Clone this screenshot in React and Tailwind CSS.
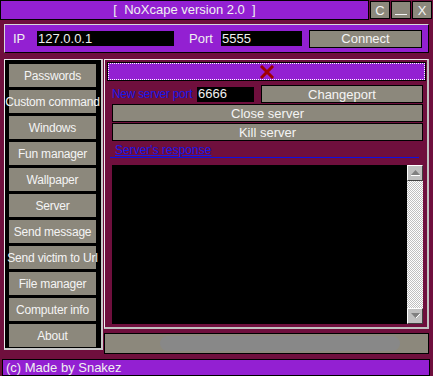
import React from 'react';

const font = { fontFamily: '"Liberation Sans", Arial, sans-serif' };

const navItems = [
  'Passwords',
  'Custom command',
  'Windows',
  'Fun manager',
  'Wallpaper',
  'Server',
  'Send message',
  'Send victim to Url',
  'File manager',
  'Computer info',
  'About',
];

const GrayButton = ({ children, className = '' }) => (
  <div
    className={`flex items-center justify-center bg-[#8c887c] border border-black text-[#f4f4f4] text-[12px] leading-none whitespace-nowrap ${className}`}
  >
    {children}
  </div>
);

export default function App() {
  return (
    <div className="w-[433px] h-[376px] bg-[#6f0f3d] overflow-hidden flex flex-col select-none" style={font}>
      {/* title bar */}
      <div className="flex h-[20px] items-stretch">
        <div className="w-[369px] bg-[#9320d2] border border-black flex items-center justify-center text-[#f0f0f0] text-[13px]">
          [&nbsp; NoXcape version 2.0 &nbsp;]
        </div>
        <div className="flex gap-px ml-px py-px">
          <GrayButton className="w-[20px] text-[13px]">C</GrayButton>
          <GrayButton className="w-[20px] items-end pb-[3px]">
            <span className="block w-[12px] h-px bg-[#f4f4f4]" />
          </GrayButton>
          <GrayButton className="w-[20px] text-[13px]">X</GrayButton>
        </div>
      </div>

      {/* connection panel */}
      <div className="ml-[4px] mt-[4px] w-[425px] h-[31px] bg-[#9320d2] border-t border-l border-[#d8d8d8] border-r border-b border-r-black border-b-black flex items-center text-[#f0f0f0] text-[13px]">
        <span className="ml-[8px] w-[24px]">IP</span>
        <div className="w-[137px] h-[15px] bg-black flex items-center px-[1px]">127.0.0.1</div>
        <span className="ml-[15px] w-[32px]">Port</span>
        <div className="w-[81px] h-[15px] bg-black flex items-center px-[1px]">5555</div>
        <GrayButton className="ml-[7px] w-[113px] h-[18px] text-[13px]">Connect</GrayButton>
      </div>

      {/* main */}
      <div className="flex mt-[6px] ml-[4px]">
        {/* nav */}
        <div className="w-[99px] h-[291px] bg-black border-t border-l border-[#e8e8e8] border-r-2 border-b-2 border-r-[#c8c8c8] border-b-[#c8c8c8] flex flex-col gap-[3px] pl-[4px] pt-[4px]">
          {navItems.map((item) => (
            <GrayButton key={item} className="w-[87px] h-[23px] border-0 text-[11.5px] tracking-[-0.2px]">
              {item}
            </GrayButton>
          ))}
        </div>

        {/* right column */}
        <div className="flex flex-col ml-[1px]">
          <div className="w-[325px] h-[270px] border-t border-l border-[#f0f0f0] border-r-2 border-b-2 border-r-[#c0c0c0] border-b-[#c0c0c0] flex flex-col">
            <div className="mt-[2px] ml-[2px] w-[319px] h-[19px] bg-black p-px">
              <div className="h-full bg-[#9320d2] border border-dotted border-white flex items-center justify-center">
                <svg width="14" height="14" viewBox="0 0 14 14">
                  <path d="M2 2 L12 12 M12 2 L2 12" stroke="#a00000" strokeWidth="3" strokeLinecap="square" />
                </svg>
              </div>
            </div>
            <div className="flex items-center mt-[4px] ml-[7px] h-[18px]">
              <span className="text-[#1818e8] text-[12px] tracking-[-0.3px] w-[85px] shrink-0 whitespace-nowrap">New server port</span>
              <div className="w-[57px] shrink-0 h-[15px] bg-black text-[#f0f0f0] text-[13px] flex items-center px-px">6666</div>
              <GrayButton className="ml-[7px] w-[162px] h-[18px] text-[13px]">Changeport</GrayButton>
            </div>
            <GrayButton className="ml-[7px] mt-px w-[311px] h-[18px] text-[13px]">Close server</GrayButton>
            <GrayButton className="ml-[7px] mt-px w-[311px] h-[18px] text-[13px]">Kill server</GrayButton>
            <div className="ml-[5px] mt-[3px] w-[309px] border-b border-[#1010e0] text-[#1818e8] text-[12px] leading-[13px] pl-[5px]">
              <span className="underline">Server's response</span>
            </div>
            <div className="flex ml-[7px] mt-[7px] h-[159px] w-[311px]">
              <div className="flex-1 bg-black" />
              <div
                className="w-[16px] flex flex-col"
                style={{ backgroundImage: 'repeating-conic-gradient(#ffffff 0% 25%, #c0c0c0 0% 50%)', backgroundSize: '2px 2px' }}
              >
                <div className="h-[16px] bg-[#c0c0c0] border-t border-l border-white border-r border-b border-r-[#404040] border-b-[#404040] flex items-center justify-center">
                  <svg width="9" height="6" viewBox="0 0 9 6"><path d="M4.5 0 L9 5 L0 5 Z" fill="#808080" /><rect x="0" y="5" width="9" height="1" fill="#fff" /></svg>
                </div>
                <div className="flex-1" />
                <div className="h-[16px] bg-[#c0c0c0] border-t border-l border-white border-r border-b border-r-[#404040] border-b-[#404040] flex items-center justify-center">
                  <svg width="9" height="6" viewBox="0 0 9 6"><path d="M0 0 L9 0 L4.5 5 Z" fill="#808080" /><path d="M5 5 L9 1" stroke="#fff" strokeWidth="1" /></svg>
                </div>
              </div>
            </div>
          </div>
          <div className="mt-[4px] w-[325px] h-[21px] bg-[#8c887c] border border-black flex items-center">
            <div className="ml-[55px] w-[240px] h-[15px] bg-[#888888] rounded-[8px]" />
          </div>
        </div>
      </div>

      {/* status bar */}
      <div className="mt-[5px] ml-[2px] w-[428px] h-[17px] bg-[#9320d2] border border-black text-[#f0f0f0] text-[13px] flex items-center pl-[3px]">
        (c) Made by Snakez
      </div>
    </div>
  );
}
